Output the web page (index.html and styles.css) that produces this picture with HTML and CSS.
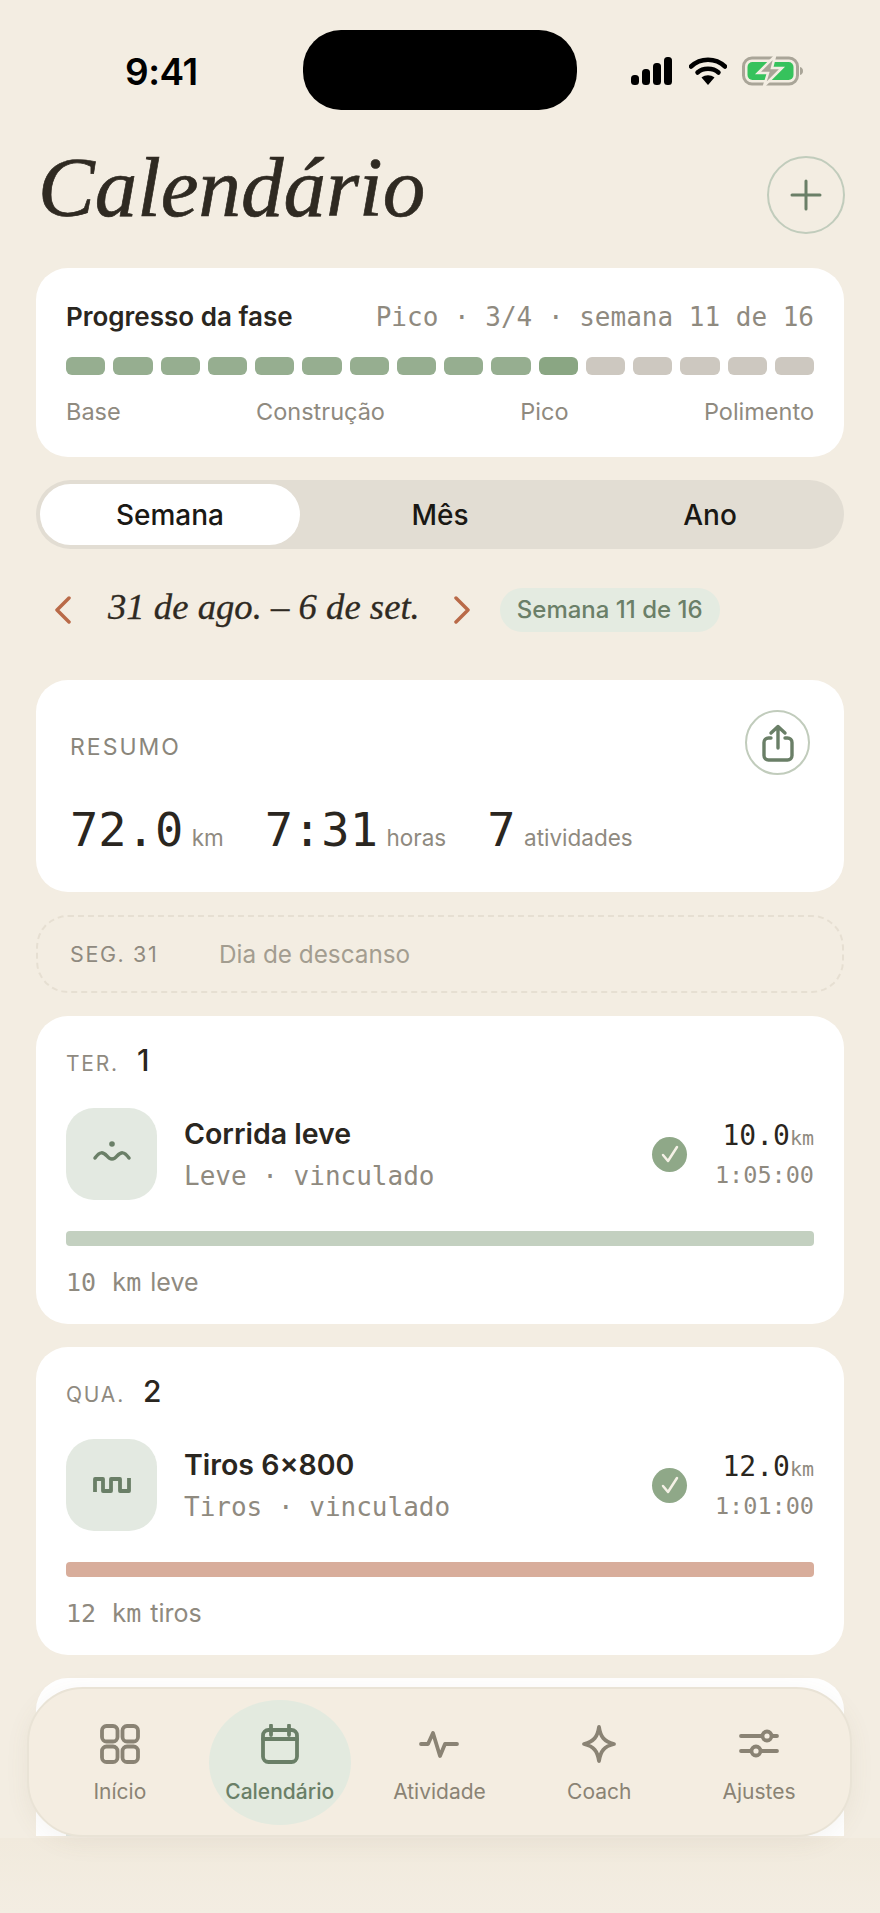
FILE: index.html
```html
<!DOCTYPE html>
<html lang="pt-BR">
<head>
<meta charset="utf-8">
<title>Calendário</title>
<link rel="stylesheet" href="styles.css">
</head>
<body>
<div class="phone">
  <div class="status">
    <span class="time">9:41</span>
    <div class="island"></div>
    <div class="status-icons">
      <svg class="ic-signal" width="42" height="28" viewBox="0 0 42 28"><rect x="0" y="18" width="8" height="10" rx="3.5"/><rect x="11" y="12" width="8" height="16" rx="3.5"/><rect x="22" y="6" width="8" height="22" rx="3.5"/><rect x="33" y="0" width="8" height="28" rx="3.5"/></svg>
      <svg class="ic-wifi" width="38" height="28" viewBox="0 0 38 28"><path d="M2 9.5C11.5 0.5 26.5 0.5 36 9.5" fill="none" stroke="#000" stroke-width="4.5" stroke-linecap="round"/><path d="M8.5 15.5C14 10.500 24 10.500 29.500 15.500" fill="none" stroke="#000" stroke-width="4.500" stroke-linecap="round"/><path d="M12.500 20.500C16.500 17.500 21.500 17.500 25.500 20.500L19 28Z" fill="#000"/></svg>
      <svg class="ic-batt" width="62" height="30" viewBox="0 0 62 30"><rect x="1.500" y="2" width="54" height="26" rx="8.500" fill="none" stroke="#a9a598" stroke-width="3"/><rect x="5.500" y="6" width="46" height="18" rx="5" fill="#36c25c"/><path d="M33 0L16 17H26L22 30L40 12H30Z" fill="#a9a598" stroke="#f3ede2" stroke-width="2.500"/><path d="M58 11C60 11.500 61 13 61 15C61 17 60 18.500 58 19Z" fill="#a9a598"/></svg>
    </div>
  </div>

  <header class="title-row">
    <h1 class="title">Calendário</h1>
    <button class="round-btn plus-btn" aria-label="Adicionar">
      <svg width="32" height="32" viewBox="0 0 32 32"><path d="M16 2V30M2 16H30" fill="none" stroke="#6a7f67" stroke-width="3" stroke-linecap="round"/></svg>
    </button>
  </header>

  <section class="card phase">
    <div class="phase-head">
      <strong class="phase-title">Progresso da fase</strong>
      <span class="mono phase-info">Pico · 3/4 · semana 11 de 16</span>
    </div>
    <div class="segments">
      <i class="seg done"></i><i class="seg done"></i><i class="seg done"></i><i class="seg done"></i>
      <i class="seg done"></i><i class="seg done"></i><i class="seg done"></i><i class="seg done"></i>
      <i class="seg done"></i><i class="seg done"></i><i class="seg current"></i><i class="seg"></i>
      <i class="seg"></i><i class="seg"></i><i class="seg"></i><i class="seg"></i>
    </div>
    <div class="phase-labels"><span>Base</span><span>Construção</span><span>Pico</span><span>Polimento</span></div>
  </section>

  <div class="tabs">
    <span class="tab active">Semana</span>
    <span class="tab">Mês</span>
    <span class="tab">Ano</span>
  </div>

  <div class="date-row">
    <svg class="chev" width="18" height="28" viewBox="0 0 18 28"><path d="M15 2L3 14L15 26" fill="none" stroke="#b96a48" stroke-width="3.500" stroke-linecap="round" stroke-linejoin="round"/></svg>
    <span class="date">31 de ago. – 6 de set.</span>
    <svg class="chev" width="18" height="28" viewBox="0 0 18 28"><path d="M3 2L15 14L3 26" fill="none" stroke="#b96a48" stroke-width="3.500" stroke-linecap="round" stroke-linejoin="round"/></svg>
    <span class="badge">Semana 11 de 16</span>
  </div>

  <main class="list">
    <section class="card summary">
      <div class="summary-head">
        <span class="eyebrow">RESUMO</span>
        <button class="round-btn share-btn" aria-label="Compartilhar">
          <svg width="34" height="38" viewBox="0 0 34 38"><path d="M10 14H7.500A4.500 4.500 0 0 0 3 18.500V31.500A4.500 4.500 0 0 0 7.500 36H26.500A4.500 4.500 0 0 0 31 31.500V18.500A4.500 4.500 0 0 0 26.500 14H24M17 24V2.500M10 9L17 2.500L24 9" fill="none" stroke="#6a7f67" stroke-width="3.400" stroke-linecap="round" stroke-linejoin="round"/></svg>
        </button>
      </div>
      <div class="stats">
        <div class="stat"><b class="mono stat-num">72.0</b><span class="stat-unit">km</span></div>
        <div class="stat"><b class="mono stat-num">7:31</b><span class="stat-unit">horas</span></div>
        <div class="stat"><b class="mono stat-num">7</b><span class="stat-unit">atividades</span></div>
      </div>
    </section>

    <section class="rest">
      <span class="rest-day">SEG. 31</span>
      <span class="rest-text">Dia de descanso</span>
    </section>

    <section class="card day">
      <div class="day-head"><span class="dow">TER.</span><span class="dom">1</span></div>
      <div class="workout">
        <div class="tile">
          <svg width="40" height="30" viewBox="0 0 40 30"><circle cx="20" cy="5" r="2.800" fill="#6a7f67"/><path d="M3 19C8 12 11 13 15 17C18 21 22 21 25 17C29 13 32 12 37 19" fill="none" stroke="#6a7f67" stroke-width="3.500" stroke-linecap="round"/></svg>
        </div>
        <div class="w-main">
          <div class="w-title">Corrida leve</div>
          <div class="mono w-sub">Leve · vinculado</div>
        </div>
        <span class="check"><svg width="20" height="20" viewBox="0 0 20 20"><path d="M3 11L8 17L17 3" fill="none" stroke="#f5f1e6" stroke-width="2.500" stroke-linecap="round" stroke-linejoin="round"/></svg></span>
        <div class="w-nums">
          <div class="mono w-dist">10.0<small>km</small></div>
          <div class="mono w-time">1:05:00</div>
        </div>
      </div>
      <div class="bar bar-easy"></div>
      <div class="plan"><span class="mono plan-num">10 km</span> leve</div>
    </section>

    <section class="card day">
      <div class="day-head"><span class="dow">QUA.</span><span class="dom">2</span></div>
      <div class="workout">
        <div class="tile">
          <svg width="40" height="18" viewBox="0 0 40 18"><path d="M3 16V3H11V15H19V3H28V15H37V2" fill="none" stroke="#6a7f67" stroke-width="3.800" stroke-linejoin="round"/></svg>
        </div>
        <div class="w-main">
          <div class="w-title">Tiros 6×800</div>
          <div class="mono w-sub">Tiros · vinculado</div>
        </div>
        <span class="check"><svg width="20" height="20" viewBox="0 0 20 20"><path d="M3 11L8 17L17 3" fill="none" stroke="#f5f1e6" stroke-width="2.500" stroke-linecap="round" stroke-linejoin="round"/></svg></span>
        <div class="w-nums">
          <div class="mono w-dist">12.0<small>km</small></div>
          <div class="mono w-time">1:01:00</div>
        </div>
      </div>
      <div class="bar bar-hard"></div>
      <div class="plan"><span class="mono plan-num">12 km</span> tiros</div>
    </section>

    <section class="card day day-cut">
      <div class="day-head"></div>
      <div class="workout">
        <div class="tile"></div>
      </div>
    </section>
  </main>

  <div class="fade"></div>

  <nav class="nav">
    <a class="nav-item">
      <svg width="40" height="40" viewBox="0 0 40 40"><g fill="none" stroke="currentColor" stroke-width="3.800"><rect x="2" y="2" width="15.500" height="15.500" rx="4.500"/><rect x="22.500" y="2" width="15.500" height="15.500" rx="4.500"/><rect x="2" y="22.500" width="15.500" height="15.500" rx="4.500"/><rect x="22.500" y="22.500" width="15.500" height="15.500" rx="4.500"/></g></svg>
      <span>Início</span>
    </a>
    <a class="nav-item active">
      <svg width="40" height="40" viewBox="0 0 40 40"><g fill="none" stroke="currentColor" stroke-width="3.800" stroke-linecap="round"><rect x="3" y="6" width="34" height="32" rx="5.500"/><path d="M3 15H37M11 1.500V11M29 1.500V11"/></g></svg>
      <span>Calendário</span>
    </a>
    <a class="nav-item">
      <svg width="40" height="40" viewBox="0 0 40 40"><path d="M2 20H9L14 9L21 32L26 20H38" fill="none" stroke="currentColor" stroke-width="3.800" stroke-linecap="round" stroke-linejoin="round"/></svg>
      <span>Atividade</span>
    </a>
    <a class="nav-item">
      <svg width="40" height="40" viewBox="0 0 40 40"><path d="M20 3C21.500 13 25 17.500 35 20C25 22.500 21.500 27 20 37C18.500 27 15 22.500 5 20C15 17.500 18.500 13 20 3Z" fill="none" stroke="currentColor" stroke-width="3.800" stroke-linejoin="round"/></svg>
      <span>Coach</span>
    </a>
    <a class="nav-item">
      <svg width="40" height="40" viewBox="0 0 40 40"><g fill="none" stroke="currentColor" stroke-width="3.800" stroke-linecap="round"><path d="M2 12H23M33 12H38M2 27H12M22 27H38"/><circle cx="28" cy="12" r="4.500"/><circle cx="17" cy="27" r="4.500"/></g></svg>
      <span>Ajustes</span>
    </a>
  </nav>
</div>
</body>
</html>
```

FILE: styles.css
```css
* { box-sizing: border-box; }
html, body { margin: 0; padding: 0; }
body { background: #f3ede2; font-family: "Inter", "Liberation Sans", sans-serif; color: #2a2620; }
.phone { position: relative; width: 880px; height: 1913px; overflow: hidden; background: #f3ede2; }
.mono { font-family: "DejaVu Sans Mono", "Liberation Mono", monospace; font-weight: 400; }

.status { display: flex; align-items: center; height: 80px; margin-top: 30px; padding-left: 125px; position: relative; }
.time { font-size: 37px; font-weight: 600; color: #000; width: 178px; line-height: 1; margin-top: 2px; letter-spacing: -0.5px; }
.island { width: 274px; height: 80px; background: #000; border-radius: 38px; }
.status-icons { display: flex; align-items: center; margin-left: 54px; margin-top: 2px; gap: 16px; }
.ic-batt { margin-left: -1px; }

.title-row { display: flex; justify-content: space-between; align-items: center; padding: 0 35px 0 38px; margin-top: 46px; height: 78px; }
.title { margin: -16px 0 0; font: italic 400 85px/78px "Liberation Serif", serif; color: #2f2a22; -webkit-text-stroke: 0.7px #2f2a22; }
.round-btn { display: flex; align-items: center; justify-content: center; padding: 0; background: transparent; border: 2px solid #c1ccbc; border-radius: 50%; }
.plus-btn { width: 78px; height: 78px; }

.card { background: #fff; border-radius: 32px; margin: 0 36px; }
.phase { margin-top: 34px; height: 189px; padding: 33px 30px 0; }
.phase-head { display: flex; justify-content: space-between; align-items: baseline; height: 36px; }
.phase-title { font-size: 26px; font-weight: 600; color: #2a2620; }
.phase-info { font-size: 26px; color: #8f8a7f; }
.segments { display: flex; gap: 8px; margin-top: 20px; }
.seg { flex: 1; height: 18px; border-radius: 6px; background: #cdc8c0; }
.seg.done { background: #96ae90; }
.seg.current { background: #8aa683; }
.phase-labels { display: flex; justify-content: space-between; margin-top: 21px; font-size: 23.500px; line-height: 32px; color: #8f8a7f; }

.tabs { display: flex; gap: 10px; margin: 23px 36px 0; height: 69px; padding: 4px; background: #e2ddd3; border-radius: 35px; }
.tab { flex: 1; display: flex; align-items: center; justify-content: center; font-size: 28px; font-weight: 500; color: #1a1814; border-radius: 31px; }
.tab.active { background: #fff; }

.date-row { display: flex; align-items: center; margin-top: 39px; padding-left: 54px; height: 44px; }
.date { font: italic 400 36.700px/44px "Liberation Serif", serif; color: #2f2a22; margin: -6px 33px 0 36px; -webkit-text-stroke: 0.3px #2f2a22; }
.badge { margin-left: 29px; padding: 0 17px; height: 44px; line-height: 44px; border-radius: 22px; background: #e4ebe1; color: #6b7f68; font-size: 24px; font-weight: 500; }

.list { display: flex; flex-direction: column; gap: 23px; margin-top: 48px; }
.summary { height: 212px; padding: 30px 34px 0; }
.summary-head { display: flex; justify-content: space-between; align-items: center; height: 65px; }
.eyebrow { font-size: 23px; letter-spacing: 2px; color: #8a867b; margin-top: 9px; }
.share-btn { width: 65px; height: 65px; }
.stats { display: flex; gap: 41px; margin-top: 27px; align-items: baseline; }
.stat { display: flex; align-items: baseline; gap: 8.500px; }
.stat-num { font-size: 47px; line-height: 56px; color: #2a2620; }
.stat-unit { font-size: 22.500px; color: #8f8a7f; }

.rest { display: flex; align-items: center; margin: 0 36px; height: 78px; padding: 0 32px; border: 2px dashed #e6dfd2; border-radius: 32px; }
.rest-day { font-size: 21.500px; letter-spacing: 1.600px; color: #8f8a7f; width: 149px; }
.rest-text { font-size: 24.300px; color: #a39d90; }

.day { height: 308px; padding: 28px 30px 0; }
.day-head { display: flex; align-items: baseline; gap: 18px; height: 32px; }
.dow { font-size: 21px; letter-spacing: 1.800px; color: #8f8a7f; }
.dom { font-size: 30px; font-weight: 500; line-height: 32px; color: #2a2620; }
.workout { display: flex; align-items: center; margin-top: 32px; height: 92px; }
.tile { width: 91px; height: 92px; flex: none; display: flex; align-items: center; justify-content: center; border-radius: 28px; background: #e3e9e1; }
.w-main { margin-left: 27px; flex: 1; }
.w-title { font-size: 28.500px; font-weight: 600; line-height: 36px; color: #2a2620; }
.w-sub { font-size: 26px; line-height: 32px; margin-top: 8px; color: #8f8a7f; }
.check { width: 35px; height: 35px; display: flex; align-items: center; justify-content: center; border-radius: 50%; background: #8fa888; }
.w-nums { width: 127px; text-align: right; }
.w-dist { font-size: 28px; line-height: 36px; color: #2a2620; }
.w-dist small { font-size: 20px; color: #8f8a7f; }
.w-time { font-size: 23.500px; line-height: 30px; margin-top: 4px; color: #8f8a7f; }
.bar { height: 15px; margin-top: 31px; border-radius: 4px; }
.bar-easy { background: #c3d0c0; }
.bar-hard { background: #d8ad9b; }
.plan { margin-top: 20px; font-size: 25px; line-height: 32px; color: #8f8a7f; }
.plan-num { font-size: 25px; margin-right: 2px; }
.day-cut { height: 158px; overflow: hidden; border-radius: 32px 32px 0 0; flex: none; }

.fade { position: absolute; left: 0; right: 0; top: 1838px; height: 75px; background: linear-gradient(#f1eadd, #f3ede2); }

.nav { position: absolute; left: 27px; top: 1687px; width: 825px; height: 150px; display: grid; grid-template-columns: repeat(5, 1fr); align-items: center; justify-items: center; padding: 0 11px; background: #f4ede1; border: 2px solid #e9e3d6; border-radius: 56px; box-shadow: 0 6px 24px rgba(120, 100, 70, 0.07); }
.nav-item { width: 142px; height: 125px; display: flex; flex-direction: column; align-items: center; padding-top: 24px; border-radius: 50%; color: #8a8374; font-size: 21px; line-height: 30px; }
.nav-item span { margin-top: 13px; }
.nav-item.active { background: #e3eadf; color: #6a7f67; font-weight: 500; }
```
